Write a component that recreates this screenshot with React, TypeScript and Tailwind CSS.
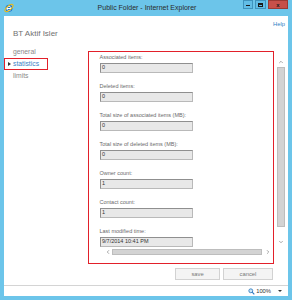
import { ChevronDown, ChevronLeft, ChevronRight, ChevronUp } from "lucide-react";

type Field = { label: string; value: string };

const fields: Field[] = [
  { label: "Associated items:", value: "0" },
  { label: "Deleted items:", value: "0" },
  { label: "Total size of associated items (MB):", value: "0" },
  { label: "Total size of deleted items (MB):", value: "0" },
  { label: "Owner count:", value: "1" },
  { label: "Contact count:", value: "1" },
  { label: "Last modified time:", value: "9/7/2014 10:41 PM" },
];

function IeLogo() {
  return (
    <svg width="10" height="10" viewBox="0 0 20 20">
      <circle cx="10" cy="10.5" r="7" fill="#1b78d0" />
      <path d="M5.8 11h8.4c0-2.6-1.8-4.3-4.2-4.3S5.8 8.6 5.8 11s1.8 4.2 4.2 4.2c1.6 0 2.8-.7 3.5-1.8" fill="none" stroke="#fff" strokeWidth="2" />
      <ellipse cx="10" cy="10" rx="10" ry="4.2" fill="none" stroke="#f5b800" strokeWidth="2" transform="rotate(-40 10 10)" />
    </svg>
  );
}

export default function App() {
  return (
    <div
      className="flex h-[300px] w-[292px] flex-col overflow-hidden bg-[#6cc5ea] px-[4px] pb-[4px]"
      style={{ fontFamily: '"Liberation Sans", Arial, sans-serif' }}
    >
      {/* title bar */}
      <div className="relative flex h-[16px] items-center">
        <div className="absolute left-0 top-[3px]">
          <IeLogo />
        </div>
        <div className="w-full pl-[2px] text-center text-[7px] leading-[8px] text-[#2b2b2b]">
          Public Folder - Internet Explorer
        </div>
        <div className="absolute right-0 top-0 flex gap-[2px]">
          <div className="flex h-[9px] w-[10px] items-center justify-center border border-[#3f93bd] bg-[#62bde6]">
            <div className="mt-[2px] h-[1.5px] w-[4px] bg-[#1b1b1b]" />
          </div>
          <div className="flex h-[9px] w-[11px] items-center justify-center border border-[#3f93bd] bg-[#62bde6]">
            <div className="h-[4px] w-[5px] border border-t-2 border-[#1b1b1b]" />
          </div>
          <div className="flex h-[9px] w-[20px] items-center justify-center border border-[#9c3a34] bg-[#c7504a] text-[6px] font-bold leading-none text-[#1b1b1b]">
            x
          </div>
        </div>
      </div>

      {/* page */}
      <div className="flex flex-1 flex-col bg-white">
        <div className="flex-1">
          <div className="flex justify-end pr-[3px] pt-[5px] text-[5.8px] leading-[7px] text-[#2f7fc4]">
            Help
          </div>
          <div className="pl-[9px] pt-[1px] text-[8px] leading-[10px] text-[#707070]">
            BT Aktif Isler
          </div>

          <div className="mt-[6px] flex">
            {/* nav */}
            <div className="w-[84px] pt-[1px] text-[6.8px] leading-[12px]">
              <div className="pl-[9px] text-[#8a8a8a]">general</div>
              <div className="flex h-[12px] w-[44px] items-center border border-[#e2202a]">
                <span className="ml-[3px] mr-[2px] h-0 w-0 border-y-[2px] border-l-[3px] border-y-transparent border-l-[#333]" />
                <span className="text-[#3a82c6]">statistics</span>
              </div>
              <div className="pl-[9px] text-[#8a8a8a]">limits</div>
            </div>

            {/* pane */}
            <div className="flex flex-col pt-[6px]">
              <div className="flex">
                <div className="h-[213px] w-[186px] border-[1.5px] border-[#e2202a] pl-[10.5px] pt-[2px]">
                  {fields.map((f) => (
                    <div key={f.label} className="mb-[10.5px]">
                      <div className="text-[5.5px] leading-[7px] text-[#6a6a6a]">{f.label}</div>
                      <div className="mt-[1.5px] flex h-[10px] w-[93px] items-center border border-[#b9b9b9] border-t-[#8f8f8f] border-l-[#8f8f8f] bg-[#e8e8e8] pl-[1.5px] text-[5.5px] text-[#333]">
                        {f.value}
                      </div>
                    </div>
                  ))}
                  <div className="-mt-[8.5px] flex items-center">
                    <ChevronLeft className="ml-[5px] h-[6px] w-[6px] text-[#777]" strokeWidth={2.5} />
                    <div className="ml-[1px] h-[6px] w-[150px] border border-[#bdbdbd] bg-[#d3d3d3]" />
                    <ChevronRight className="ml-[3px] h-[6px] w-[6px] text-[#777]" strokeWidth={2.5} />
                  </div>
                </div>
                <div className="ml-[3px] flex w-[8px] flex-col items-center pt-[8px]">
                  <ChevronUp className="h-[6px] w-[6px] text-[#777]" strokeWidth={2.5} />
                  <div className="mt-[2px] h-[160px] w-[8px] border border-[#bdbdbd] bg-[#d3d3d3]" />
                  <ChevronDown className="mt-[12px] h-[6px] w-[6px] text-[#777]" strokeWidth={2.5} />
                </div>
              </div>
              <div className="mt-[4px] flex w-[186px] justify-end gap-[3px] pr-[1px]">
                <div className="flex h-[12px] w-[45px] items-center justify-center border border-[#d2d2d2] bg-[#f4f4f4] text-[5.8px] text-[#777]">
                  save
                </div>
                <div className="flex h-[12px] w-[50px] items-center justify-center border border-[#d2d2d2] bg-[#f4f4f4] text-[5.8px] text-[#777]">
                  cancel
                </div>
              </div>
            </div>
          </div>
        </div>

        {/* status bar */}
        <div className="flex h-[11px] items-center justify-end border-t border-[#d4d4d4] pr-[6px] text-[5.8px] text-[#333]">
          <svg width="7" height="7" viewBox="0 0 10 10" className="mr-[1px]">
            <circle cx="4" cy="4" r="2.8" fill="#cde6f7" stroke="#2a78c0" strokeWidth="1.2" />
            <path d="M6 6l3 3" stroke="#2a78c0" strokeWidth="1.6" />
          </svg>
          <span>100%</span>
          <span className="ml-[7px] h-0 w-0 border-x-[2px] border-t-[2.5px] border-x-transparent border-t-[#333]" />
        </div>
      </div>
    </div>
  );
}
